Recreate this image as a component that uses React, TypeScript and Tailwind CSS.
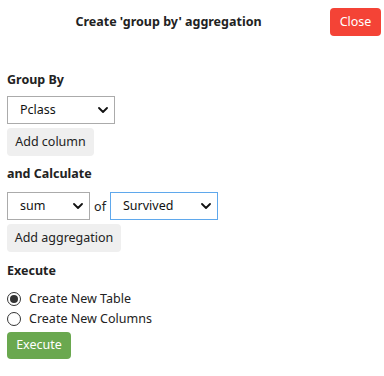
import React from "react";

function Chevron() {
  return (
    <svg width="10" height="6" viewBox="0 0 10 6" className="shrink-0">
      <path d="M1 1 L5 5 L9 1" fill="none" stroke="#111" strokeWidth="1.8" strokeLinecap="round" strokeLinejoin="round" />
    </svg>
  );
}

function FakeSelect({ value, w, focused }: { value: string; w: string; focused?: boolean }) {
  return (
    <div
      className={`${w} h-[28px] flex items-center justify-between pl-[12px] pr-[6px] bg-white border ${
        focused ? "border-[#5fa8ec]" : "border-[#ababab]"
      } text-[12.5px] text-[#111]`}
    >
      <span>{value}</span>
      <Chevron />
    </div>
  );
}

function GrayButton({ children, w }: { children: React.ReactNode; w: string }) {
  return (
    <button className={`${w} h-[28px] rounded-[4px] bg-[#efefef] text-[12.5px] text-[#222] flex items-center justify-center`}>
      {children}
    </button>
  );
}

function Radio({ checked, label }: { checked?: boolean; label: string }) {
  return (
    <label className="flex items-center gap-[8px] h-[20px] text-[12.5px] text-[#222]">
      <span className="w-[14px] h-[14px] rounded-full border border-[#333] flex items-center justify-center bg-white">
        {checked && <span className="w-[8px] h-[8px] rounded-full bg-[#333]" />}
      </span>
      <span>{label}</span>
    </label>
  );
}

export default function App() {
  return (
    <div
      className="w-[384px] h-[376px] bg-white pl-[7px] pr-[3px] pt-[8px]"
      style={{ fontFamily: '"Noto Sans", "Open Sans", sans-serif' }}
    >
      <div className="flex items-center">
        <div className="flex-1 text-center font-bold text-[12.5px] text-[#222]">Create 'group by' aggregation</div>
        <button className="w-[51px] h-[28px] rounded-[4px] bg-[#f44336] text-white text-[12.5px] flex items-center justify-center">
          Close
        </button>
      </div>

      <div className="mt-[35px] font-bold text-[12.5px] text-[#222] leading-[18px]">Group By</div>
      <div className="mt-[7px] flex flex-col items-start gap-[4px]">
        <FakeSelect value="Pclass" w="w-[108px]" />
        <GrayButton w="w-[87px]">Add column</GrayButton>
      </div>

      <div className="mt-[9px] font-bold text-[12.5px] text-[#222] leading-[18px]">and Calculate</div>
      <div className="mt-[9px] flex flex-col items-start gap-[4px]">
        <div className="flex items-center">
          <FakeSelect value="sum" w="w-[83px]" />
          <span className="w-[20px] text-center text-[12.5px] text-[#222] mt-[2px]">of</span>
          <FakeSelect value="Survived" w="w-[108px]" focused />
        </div>
        <GrayButton w="w-[114px]">Add aggregation</GrayButton>
      </div>

      <div className="mt-[10px] font-bold text-[12.5px] text-[#222] leading-[18px]">Execute</div>
      <div className="mt-[9px] flex flex-col">
        <Radio checked label="Create New Table" />
        <Radio label="Create New Columns" />
      </div>
      <button className="mt-[3px] w-[64px] h-[27px] rounded-[4px] bg-[#6aa84f] text-white text-[12.5px] flex items-center justify-center">
        Execute
      </button>
    </div>
  );
}
